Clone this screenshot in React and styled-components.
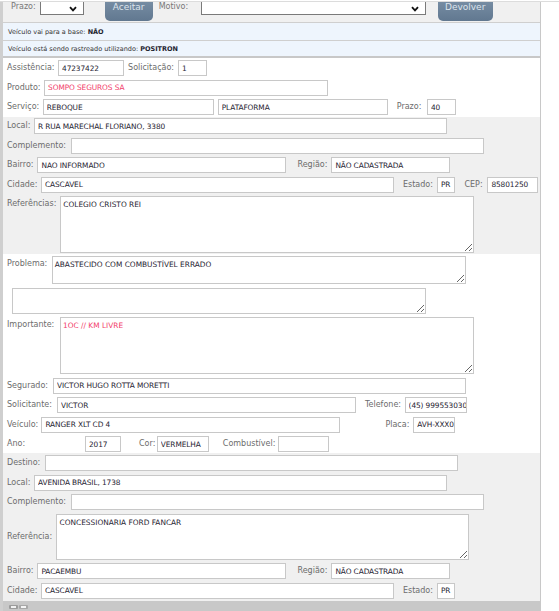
import styled, { createGlobalStyle } from "styled-components";

const GlobalStyle = createGlobalStyle`
  html, body {
    margin: 0;
    padding: 0;
    background: #fff;
  }
  body {
    font-family: Verdana, "DejaVu Sans", sans-serif;
  }
`;

const Page = styled.div`
  width: 559px;
  border-top: 1px solid #dcdcdc;
  margin-top: 1px;
`;

const Panel = styled.div`
  width: 537px;
  border-left: 3px solid #cfcfcf;
  border-right: 1px solid #c8c8c8;
  background: #fff;
`;

const Toolbar = styled.div`
  height: 20px;
  overflow: hidden;
  background: #f0f0f0;
  display: flex;
  align-items: flex-end;
  padding-left: 8px;
`;

const ToolLabel = styled.span`
  font-size: 8px;
  line-height: 10px;
  color: #777;
  margin-left: ${(p) => p.$ml || 0}px;
  margin-right: ${(p) => p.$mr || 4}px;
  margin-bottom: 10px;
  white-space: nowrap;
`;

const FakeSelect = styled.div`
  width: ${(p) => p.$w}px;
  height: 18px;
  box-sizing: border-box;
  border: 1px solid #7a7a7a;
  background: #fff;
  margin-bottom: 7px;
  display: flex;
  align-items: flex-end;
  justify-content: flex-end;
  padding: 0 6px 2px 0;
  flex-shrink: 0;
`;

const ActionButton = styled.div`
  width: ${(p) => p.$w}px;
  height: 26px;
  margin-left: ${(p) => p.$ml || 0}px;
  margin-bottom: 1px;
  box-sizing: border-box;
  border-radius: 5px;
  background: linear-gradient(#7d93a9, #617890);
  color: #dde4ec;
  font-size: 9px;
  display: flex;
  align-items: flex-end;
  justify-content: center;
  padding-bottom: 9px;
  flex-shrink: 0;
`;

const InfoBox = styled.div`
  border-top: 1px solid #cfcfcf;
  border-bottom: 2px solid #c8c8c8;
`;

const InfoRow = styled.div`
  height: ${(p) => p.$h}px;
  background: #eef5fd;
  display: flex;
  align-items: center;
  padding-left: 5px;
  font-size: 6.5px;
  color: #333;
  & + & {
    border-top: 1px solid #cfcfcf;
  }
  b {
    color: #1e2430;
  }
`;

const Section = styled.div`
  background: ${(p) => (p.$gray ? "#f0f0f0" : "#fff")};
  padding: ${(p) => p.$pt}px 0 ${(p) => p.$pb}px 4px;
  display: flex;
  flex-direction: column;
  gap: 3.5px;
`;

const Row = styled.div`
  display: flex;
  align-items: ${(p) => (p.$top ? "flex-start" : "center")};
  padding-left: ${(p) => p.$indent || 0}px;
`;

const Label = styled.span`
  font-size: 8px;
  line-height: 10px;
  color: #6c6c6c;
  white-space: nowrap;
  flex-shrink: 0;
  width: ${(p) => (p.$w ? `${p.$w}px` : "auto")};
  margin-left: ${(p) => p.$ml || 0}px;
  margin-right: ${(p) => (p.$mr !== undefined ? p.$mr : 3.5)}px;
  padding-top: ${(p) => (p.$top ? 3 : 0)}px;
`;

const Field = styled.input`
  width: ${(p) => p.$w}px;
  height: 16px;
  box-sizing: border-box;
  flex-shrink: 0;
  margin: 0 0 0 ${(p) => p.$ml || 0}px;
  border: 1px solid #c8c8c8;
  background: #fff;
  padding: 0 0 0 3px;
  font-family: Verdana, "DejaVu Sans", sans-serif;
  font-size: 7.4px;
  letter-spacing: -0.1px;
  color: ${(p) => (p.$red ? "#f2406a" : "#1f2432")};
  outline: none;
`;

const Area = styled.textarea`
  width: ${(p) => p.$w}px;
  height: ${(p) => p.$h}px;
  box-sizing: border-box;
  flex-shrink: 0;
  margin: 0;
  border: 1px solid #c8c8c8;
  background: #fff;
  padding: 3px 2px;
  font-family: Verdana, "DejaVu Sans", sans-serif;
  font-size: 7.4px;
  line-height: 10px;
  color: ${(p) => (p.$red ? "#f2406a" : "#1f2432")};
  overflow: hidden;
  outline: none;
`;

const BottomBar = styled.div`
  height: 12px;
  background: #c8c8c8;
  display: flex;
  align-items: center;
  padding-left: 6px;
`;

function Chevron() {
  return (
    <svg width="8" height="6" viewBox="0 0 8 6">
      <path d="M1 1.2 L4 4.4 L7 1.2" fill="none" stroke="#111" strokeWidth="1.8" />
    </svg>
  );
}

export default function App() {
  return (
    <>
      <GlobalStyle />
      <Page>
        <Panel>
          <Toolbar>
            <ToolLabel>Prazo:</ToolLabel>
            <FakeSelect $w={44}>
              <Chevron />
            </FakeSelect>
            <ActionButton $w={48} $ml={21}>
              Aceitar
            </ActionButton>
            <ToolLabel $ml={6} $mr={12.5}>
              Motivo:
            </ToolLabel>
            <FakeSelect $w={225}>
              <Chevron />
            </FakeSelect>
            <ActionButton $w={55} $ml={12}>
              Devolver
            </ActionButton>
          </Toolbar>

          <InfoBox>
            <InfoRow $h={17}>
              <span>
                Veículo vai para a base: <b>NÃO</b>
              </span>
            </InfoRow>
            <InfoRow $h={15}>
              <span>
                Veículo está sendo rastreado utilizando: <b>POSITRON</b>
              </span>
            </InfoRow>
          </InfoBox>

          <Section $pt={2} $pb={2}>
            <Row>
              <Label>Assistência:</Label>
              <Field $w={66} defaultValue="47237422" />
              <Label $ml={4} $mr={4}>
                Solicitação:
              </Label>
              <Field $w={29} defaultValue="1" />
            </Row>
            <Row>
              <Label>Produto:</Label>
              <Field $w={284} $red defaultValue="SOMPO SEGUROS SA" />
            </Row>
            <Row>
              <Label>Serviço:</Label>
              <Field $w={171} defaultValue="REBOQUE" />
              <Field $w={170} $ml={4} defaultValue="PLATAFORMA" />
              <Label $ml={9} $mr={5.5}>
                Prazo:
              </Label>
              <Field $w={29} defaultValue="40" />
            </Row>
          </Section>

          <Section $gray $pt={1} $pb={1}>
            <Row>
              <Label>Local:</Label>
              <Field $w={413} defaultValue="R RUA MARECHAL FLORIANO, 3380" />
            </Row>
            <Row>
              <Label $mr={5}>Complemento:</Label>
              <Field $w={413} defaultValue="" />
            </Row>
            <Row>
              <Label $mr={4}>Bairro:</Label>
              <Field $w={249} defaultValue="NAO INFORMADO" />
              <Label $ml={11} $mr={4}>
                Região:
              </Label>
              <Field $w={119} defaultValue="NÃO CADASTRADA" />
            </Row>
            <Row>
              <Label>Cidade:</Label>
              <Field $w={353} defaultValue="CASCAVEL" />
              <Label $ml={9} $mr={4}>
                Estado:
              </Label>
              <Field $w={18} defaultValue="PR" />
              <Label $ml={9.5} $mr={4.8}>
                CEP:
              </Label>
              <Field $w={51} defaultValue="85801250" />
            </Row>
            <Row $top>
              <Label $top $mr={4}>
                Referências:
              </Label>
              <Area $w={414} $h={57} defaultValue="COLEGIO CRISTO REI" />
            </Row>
          </Section>

          <Section $pt={2} $pb={1}>
            <Row $top>
              <Label $top $mr={4.4}>
                Problema:
              </Label>
              <Area $w={414} $h={28} defaultValue="ABASTECIDO COM COMBUSTÍVEL ERRADO" />
            </Row>
            <Row $indent={5}>
              <Area $w={414} $h={26} defaultValue="" />
            </Row>
            <Row $top>
              <Label $top $mr={5.7}>
                Importante:
              </Label>
              <Area $w={414} $h={57} $red defaultValue="1OC // KM LIVRE" />
            </Row>
            <Row>
              <Label $mr={5}>Segurado:</Label>
              <Field $w={413} defaultValue="VICTOR HUGO ROTTA MORETTI" />
            </Row>
            <Row>
              <Label $mr={5.1}>Solicitante:</Label>
              <Field $w={299} defaultValue="VICTOR" />
              <Label $ml={9} $mr={3.6}>
                Telefone:
              </Label>
              <Field $w={62} defaultValue="(45) 999553030" />
            </Row>
            <Row>
              <Label $mr={3.1}>Veículo:</Label>
              <Field $w={299} defaultValue="RANGER XLT CD 4" />
              <Label $ml={45} $mr={4}>
                Placa:
              </Label>
              <Field $w={42} defaultValue="AVH-XXX0" />
            </Row>
            <Row>
              <Label $w={78} $mr={0}>
                Ano:
              </Label>
              <Field $w={36} defaultValue="2017" />
              <Label $ml={18} $mr={1.5}>
                Cor:
              </Label>
              <Field $w={52} defaultValue="VERMELHA" />
              <Label $ml={14} $mr={2.5}>
                Combustível:
              </Label>
              <Field $w={51} defaultValue="" />
            </Row>
          </Section>

          <Section $gray $pt={2} $pb={2.5}>
            <Row>
              <Label $mr={4.7}>Destino:</Label>
              <Field $w={413} defaultValue="" />
            </Row>
            <Row>
              <Label>Local:</Label>
              <Field $w={413} defaultValue="AVENIDA BRASIL, 1738" />
            </Row>
            <Row>
              <Label $mr={5}>Complemento:</Label>
              <Field $w={413} defaultValue="" />
            </Row>
            <Row>
              <Label $mr={4.3}>Referência:</Label>
              <Area $w={413} $h={46} defaultValue="CONCESSIONARIA FORD FANCAR" />
            </Row>
            <Row>
              <Label $mr={4}>Bairro:</Label>
              <Field $w={249} defaultValue="PACAEMBU" />
              <Label $ml={11} $mr={4}>
                Região:
              </Label>
              <Field $w={119} defaultValue="NÃO CADASTRADA" />
            </Row>
            <Row>
              <Label>Cidade:</Label>
              <Field $w={353} defaultValue="CASCAVEL" />
              <Label $ml={9} $mr={4}>
                Estado:
              </Label>
              <Field $w={18} defaultValue="PR" />
            </Row>
          </Section>

          <BottomBar>
            <svg width="20" height="6" viewBox="0 0 20 6">
              <rect x="0" y="1" width="9" height="4" rx="1" fill="#9c9c9c" />
              <rect x="2" y="2" width="5" height="2" fill="#f2f2f2" />
              <rect x="10" y="1" width="9" height="4" rx="1" fill="#a8a8a8" />
              <rect x="12" y="2" width="5" height="2" fill="#f5f5f5" />
            </svg>
          </BottomBar>
        </Panel>
      </Page>
    </>
  );
}
